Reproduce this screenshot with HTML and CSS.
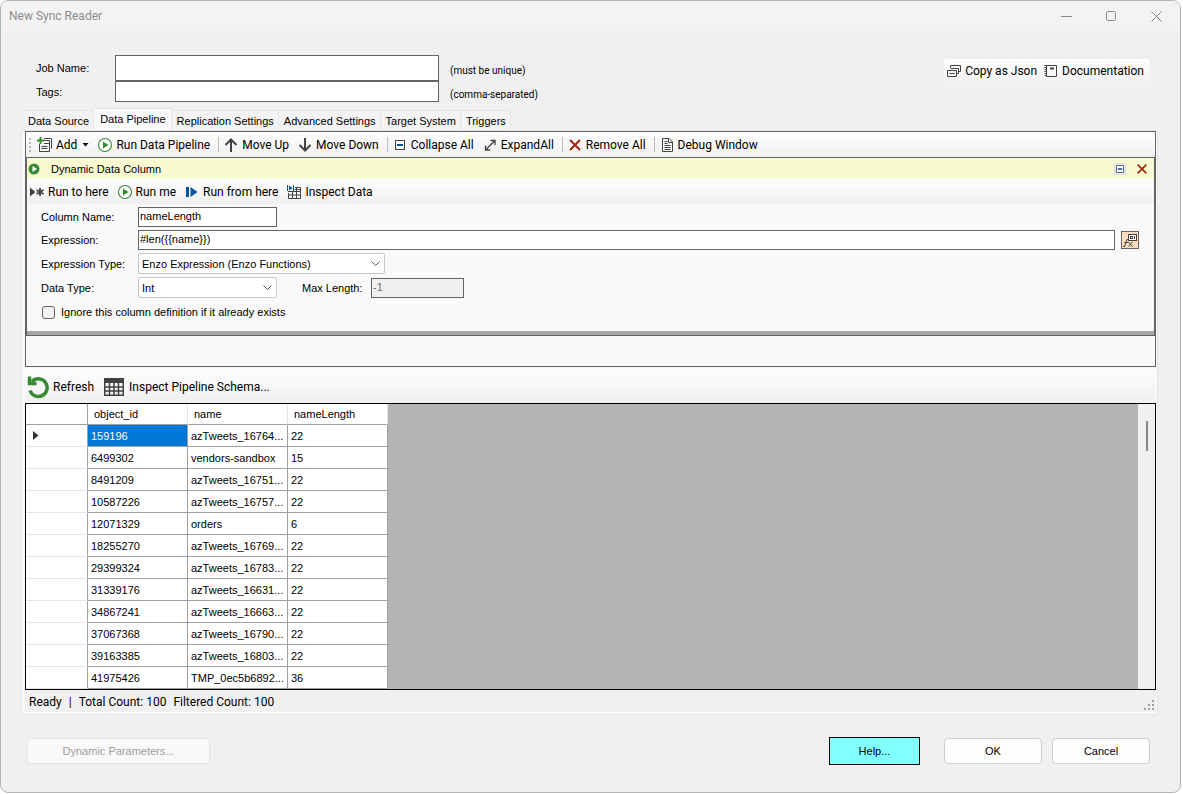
FILE: index.html
```
<!DOCTYPE html>
<html lang="en">
<head>
  <meta charset="UTF-8">
  <title>New Sync Reader</title>
  <link rel="stylesheet" href="styles.css">
</head>
<body>
  <!-- shared toolbar icons -->
  <svg class="symbols" aria-hidden="true">
    <symbol id="i-run" viewBox="0 0 16 16">
      <circle cx="8" cy="8" r="6.5" fill="#fff" stroke="#388a34" stroke-width="1.1"/>
      <path d="M6 4.5v7l5.5-3.5z" fill="#388a34"/>
    </symbol>
    <symbol id="i-x" viewBox="0 0 16 16">
      <path d="M3 3l10 10M13 3L3 13" fill="none" stroke="#a1260d" stroke-width="2"/>
    </symbol>
    <symbol id="i-collapse" viewBox="0 0 16 16">
      <rect x="3.5" y="3.5" width="9" height="9" fill="#fff" stroke="#424242"/>
      <path d="M5 8h6" stroke="#00539c" stroke-width="2"/>
    </symbol>
  </svg>

  <div class="window">
    <header class="titlebar">
      <h1>New Sync Reader</h1>
      <div class="window-buttons">
        <button aria-label="Minimize"><svg width="11" height="11"><path d="M0 5.5h11"/></svg></button>
        <button aria-label="Maximize"><svg width="11" height="11"><rect x="0.5" y="0.5" width="9" height="9" rx="1"/></svg></button>
        <button aria-label="Close"><svg width="11" height="11"><path d="M0.5 0.5l10 10M10.5 0.5l-10 10"/></svg></button>
      </div>
    </header>

    <section class="job">
      <div class="job-fields">
        <label for="job-name">Job Name:</label>
        <input id="job-name" class="job-name" type="text">
        <span class="hint">(must be unique)</span>
        <label for="tags">Tags:</label>
        <input id="tags" class="tags" type="text">
        <span class="hint">(comma-separated)</span>
      </div>
      <div class="doc-tools">
        <button class="tool">
          <svg class="icon" viewBox="0 0 16 16" fill="none" stroke="#424242"><path d="M4.5 5V2.5h10v6H12M5 5.5h7.5v5H11"/><path d="M1.5 7.5h9v6h-9zM3.5 10.5h5"/></svg>
          Copy as Json
        </button>
        <button class="tool">
          <svg class="icon" viewBox="0 0 16 16" fill="none" stroke="#424242"><path d="M3.5 2.5h10v11h-10z"/><path d="M7 5.5h4" stroke-width="2"/><path d="M2.5 2v12" stroke-width="2" stroke-dasharray="1 1"/></svg>
          Documentation
        </button>
      </div>
    </section>

    <nav class="tabs" role="tablist">
      <button class="tab" role="tab">Data Source</button>
      <button class="tab active" role="tab" aria-selected="true">Data Pipeline</button>
      <button class="tab" role="tab">Replication Settings</button>
      <button class="tab" role="tab">Advanced Settings</button>
      <button class="tab" role="tab">Target System</button>
      <button class="tab" role="tab">Triggers</button>
    </nav>

    <main class="page">
      <div class="pipeline">
        <div class="toolbar">
          <span class="grip"></span>
          <button class="tool">
            <svg class="icon" viewBox="0 0 16 16" fill="none" stroke="#424242"><path d="M7 1.5h7.5v10M7 3.5h5.5v10M2.5 7v7.5h10v-8H7M4.5 9.5h6M4.5 11.5h6"/><path d="M3.5 0v7M0 3.5h7" stroke="#388a34" stroke-width="2"/></svg>
            Add
            <svg class="caret" width="7" height="4"><path d="M0.5 0h6l-3 3.5z"/></svg>
          </button>
          <button class="tool"><svg class="icon"><use href="#i-run"/></svg>Run Data Pipeline</button>
          <span class="sep"></span>
          <button class="tool">
            <svg class="icon" viewBox="0 0 16 16" fill="none" stroke="#424242" stroke-width="2"><path d="M8 15V3M2.5 8L8 2.5 13.5 8"/></svg>
            Move Up
          </button>
          <button class="tool">
            <svg class="icon" viewBox="0 0 16 16" fill="none" stroke="#424242" stroke-width="2"><path d="M8 1v12M2.5 8L8 13.5 13.5 8"/></svg>
            Move Down
          </button>
          <span class="sep"></span>
          <button class="tool"><svg class="icon"><use href="#i-collapse"/></svg>Collapse All</button>
          <button class="tool">
            <svg class="icon" viewBox="0 0 16 16" fill="none" stroke="#424242" stroke-width="1.3"><path d="M4 12.5L12.5 4M8.5 3.5H13V8M3.5 8.5V13H8"/></svg>
            ExpandAll
          </button>
          <span class="sep"></span>
          <button class="tool"><svg class="icon"><use href="#i-x"/></svg>Remove All</button>
          <span class="sep"></span>
          <button class="tool">
            <svg class="icon" viewBox="0 0 16 16" fill="none" stroke="#424242"><path d="M3.5 1.5h6.5l3.5 3.5v9.5h-10zM9.5 1.5v4h4M5.5 4.5h3M5.5 6.5h3M5.5 8.5h6M5.5 10.5h6M5.5 12.5h6"/></svg>
            Debug Window
          </button>
        </div>

        <section class="step">
          <div class="step-header">
            <svg class="step-state" viewBox="0 0 12 12"><circle cx="6" cy="6" r="5.5" fill="#388a34"/><path d="M4.5 3v6l4.5-3z" fill="#fff"/></svg>
            <h2>Dynamic Data Column</h2>
            <button class="step-button collapse" aria-label="Collapse"><svg class="icon"><use href="#i-collapse"/></svg></button>
            <button class="step-button" aria-label="Remove"><svg class="icon"><use href="#i-x"/></svg></button>
          </div>
          <div class="toolbar step-toolbar">
            <button class="tool">
              <svg class="icon" viewBox="0 0 16 16"><path d="M1 3.500v9L6.5 8z" fill="#424242"/><path d="M11 4v8M7.5 6l7 4M14.5 6l-7 4" stroke="#424242" stroke-width="1.8"/></svg>
              Run to here
            </button>
            <button class="tool"><svg class="icon"><use href="#i-run"/></svg>Run me</button>
            <button class="tool">
              <svg class="icon" viewBox="0 0 16 16" fill="#00539c"><path d="M2 3h3v10H2zM6.5 3v10L13.5 8z"/></svg>
              Run from here
            </button>
            <button class="tool">
              <svg class="icon" viewBox="0 0 16 16" fill="none" stroke="#424242"><path d="M9 3.5h5.5v11h-12V9M2 7.5h13M2 11h13M6.5 7v8M10.5 4v11M9 5.5h6"/><path d="M1.5 1v6M7.5 1v6" stroke="#00539c"/><path d="M3 1.5v5l3.5-2.5z" fill="#00539c" stroke="none"/></svg>
              Inspect Data
            </button>
          </div>
          <div class="step-form">
            <label for="column-name">Column Name:</label>
            <div class="field"><input id="column-name" class="w-medium" type="text" value="nameLength"></div>
            <label for="expression">Expression:</label>
            <div class="field">
              <input id="expression" class="w-full" type="text" value="#len({{name}})">
              <button class="fx" aria-label="Edit expression">
                <svg width="16" height="16" viewBox="0 0 16 16" fill="none" stroke="#424242"><rect x="6.5" y="2.5" width="8" height="6" fill="#fff"/><rect x="8.5" y="4.5" width="2" height="2"/><path d="M12.5 4v3M1 14.5h1.5L5 7.5h2M2.5 10.5h4M6.5 10l4 4.5M10.5 10l-4 4.5"/></svg>
              </button>
            </div>
            <label for="expression-type">Expression Type:</label>
            <div class="field">
              <select id="expression-type" class="w-large"><option>Enzo Expression (Enzo Functions)</option></select>
            </div>
            <label for="data-type">Data Type:</label>
            <div class="field">
              <select id="data-type" class="w-medium"><option>Int</option></select>
              <label class="max-label" for="max-length">Max Length:</label>
              <input id="max-length" class="w-small" type="text" value="-1" disabled>
            </div>
            <label class="check"><input type="checkbox"> Ignore this column definition if it already exists</label>
          </div>
        </section>
      </div>

      <div class="toolbar data-toolbar">
        <button class="tool">
          <svg class="icon-large" viewBox="0 0 24 24" fill="none" stroke="#388a34" stroke-width="3.5"><path d="M6 6.5A8.800 8.800 0 1 1 4 15.500"/><path d="M3.500 1.500v7h7"/></svg>
          Refresh
        </button>
        <button class="tool">
          <svg class="icon-large" viewBox="0 0 24 24" fill="none" stroke="#424242"><path d="M2 3h20v5H2z" fill="#424242" stroke="none"/><path d="M2.75 8v12.25h18.5V8M2 12h20M2 16h20M7.5 8v12M12 8v12M16.5 8v12" stroke-width="1.5"/></svg>
          Inspect Pipeline Schema...
        </button>
      </div>

      <div class="grid">
        <table>
          <thead>
            <tr><th class="row-head"></th><th>object_id</th><th>name</th><th>nameLength</th></tr>
          </thead>
          <tbody>
            <tr><td class="row-head"><svg width="6" height="9"><path d="M0 0v9L5.5 4.5z"/></svg></td><td class="selected">159196</td><td>azTweets_16764...</td><td>22</td></tr>
            <tr><td class="row-head"></td><td>6499302</td><td>vendors-sandbox</td><td>15</td></tr>
            <tr><td class="row-head"></td><td>8491209</td><td>azTweets_16751...</td><td>22</td></tr>
            <tr><td class="row-head"></td><td>10587226</td><td>azTweets_16757...</td><td>22</td></tr>
            <tr><td class="row-head"></td><td>12071329</td><td>orders</td><td>6</td></tr>
            <tr><td class="row-head"></td><td>18255270</td><td>azTweets_16769...</td><td>22</td></tr>
            <tr><td class="row-head"></td><td>29399324</td><td>azTweets_16783...</td><td>22</td></tr>
            <tr><td class="row-head"></td><td>31339176</td><td>azTweets_16631...</td><td>22</td></tr>
            <tr><td class="row-head"></td><td>34867241</td><td>azTweets_16663...</td><td>22</td></tr>
            <tr><td class="row-head"></td><td>37067368</td><td>azTweets_16790...</td><td>22</td></tr>
            <tr><td class="row-head"></td><td>39163385</td><td>azTweets_16803...</td><td>22</td></tr>
            <tr><td class="row-head"></td><td>41975426</td><td>TMP_0ec5b6892...</td><td>36</td></tr>
          </tbody>
        </table>
        <div class="scrollbar"><div class="thumb"></div></div>
      </div>

      <div class="status">
        <span>Ready</span><span>|</span><span>Total Count: 100</span><span>Filtered Count: 100</span>
        <svg class="resize" width="10" height="10"><path d="M8 0h2v2h-2zM4 4h2v2h-2zM8 4h2v2h-2zM0 8h2v2h-2zM4 8h2v2h-2zM8 8h2v2h-2z"/></svg>
      </div>
    </main>

    <footer class="actions">
      <button class="btn params" disabled>Dynamic Parameters...</button>
      <button class="btn help">Help...</button>
      <button class="btn">OK</button>
      <button class="btn">Cancel</button>
    </footer>
  </div>
</body>
</html>
```
FILE: styles.css
```
* {
  box-sizing: border-box;
}
body {
  margin: 0;
  background: #fff;
  font-family: "Liberation Sans", Arial, sans-serif;
  font-size: 11px;
  line-height: 14px;
  color: #000;
}
button, input, select {
  font: inherit;
  color: inherit;
  margin: 0;
}
h1, h2 {
  margin: 0;
  font-size: inherit;
  font-weight: normal;
}
.symbols {
  position: absolute;
  width: 0;
  height: 0;
}
.window {
  display: flex;
  flex-direction: column;
  min-height: calc(100vh - 1px);
  margin-right: 2px;
  border: 1px solid #b4b4b4;
  border-radius: 8px;
  background: #f0f0f0;
  overflow: hidden;
}

/* title bar */
.titlebar {
  display: flex;
  justify-content: space-between;
  align-items: center;
  height: 30px;
  padding: 0 18px 0 8px;
  background: #f3f3f3;
  font-family: Roboto, sans-serif;
  font-size: 12px;
  color: #8b8b8b;
}
.window-buttons {
  display: flex;
  gap: 34px;
}
.window-buttons button {
  display: flex;
  padding: 0;
  border: none;
  background: none;
}
.window-buttons svg {
  fill: none;
  stroke: #8b8b8b;
}

/* job fields */
.job {
  display: flex;
  justify-content: space-between;
  align-items: flex-start;
  padding: 24px 30px 0 35px;
}
.job-fields {
  display: grid;
  grid-template-columns: 79px 324px auto;
  align-items: center;
}
.job-fields .hint {
  padding: 6px 0 0 11px;
  font-family: Roboto, sans-serif;
  font-size: 10px;
}
input[type="text"] {
  border: 1px solid #646464;
  background: #fff;
  padding: 0 0 2px 1px;
  height: 20px;
}
input[type="text"].job-name {
  height: 26px;
}
input[type="text"].tags {
  height: 21px;
}
.doc-tools {
  display: flex;
  align-items: center;
  gap: 6px;
  height: 26px;
  margin-top: 4px;
  padding: 0 6px 3px 2px;
  border-radius: 3px;
  background: linear-gradient(#fdfdfd, #f0f0f0);
}

/* tabs */
.tabs {
  display: flex;
  align-items: flex-end;
  padding-left: 22px;
  margin-top: 6px;
}
.tab {
  height: 20px;
  padding: 0 4px 0 5px;
  border: 1px solid #e5e5e5;
  border-width: 1px 1px 0 0;
  background: #f3f3f3;
}
.tab.active {
  height: 22px;
  padding: 0 5px 2px 6px;
  background: #f9f9f9;
}
.page {
  margin: 0 22px 0 20px;
  padding: 0 1px 2px 3px;
  border: 1px solid #e5e5e5;
  background: #f9f9f9;
}

/* toolbars */
.toolbar {
  display: flex;
  align-items: center;
  gap: 8px;
  height: 25px;
  padding-left: 3px;
  background: linear-gradient(#fdfdfd, #f0f0f0);
}
.tool {
  display: flex;
  align-items: center;
  gap: 3px;
  padding: 0;
  border: none;
  background: none;
  font-family: Roboto, sans-serif;
  font-size: 12px;
  line-height: 16px;
  white-space: nowrap;
}
.icon {
  width: 16px;
  height: 16px;
  flex: none;
}
.icon-large {
  width: 24px;
  height: 24px;
}
.caret {
  margin-left: 2px;
}
.grip {
  width: 2px;
  height: 14px;
  margin-right: -2px;
  background: repeating-linear-gradient(#b4b4b4 0 2px, transparent 2px 4px);
}
.sep {
  width: 1px;
  height: 15px;
  margin-right: -4px;
  background: #bdbdbd;
}

/* pipeline */
.pipeline {
  min-height: 236px;
  border: 1px solid #646464;
}
.step {
  border: 1px solid #646464;
}
.step-header {
  display: flex;
  align-items: center;
  height: 21px;
  padding: 0 5px 0 1px;
  background: #f9f9d2;
}
.step-header h2 {
  flex: 1;
  padding-left: 11px;
}
.step-state {
  width: 12px;
  height: 12px;
}
.step-button {
  display: flex;
  padding: 0;
  border: none;
  background: none;
}
.step-button .icon {
  width: 14px;
  height: 14px;
}
.step-button.collapse .icon {
  width: 12px;
  height: 12px;
}
.step-button.collapse {
  margin-right: 9px;
  background: #dfe3e6;
}
.step-toolbar {
  padding-left: 2px;
}
.step-form {
  display: grid;
  grid-template-columns: 97px 1fr;
  align-items: center;
  row-gap: 3px;
  padding: 3px 15px 8px 14px;
  border-bottom: 4px solid #a6a6a6;
  background: #f9f9f9;
}
.field {
  display: flex;
  align-items: center;
}
.w-small {
  width: 93px;
}
.w-medium {
  width: 139px;
}
.w-large {
  width: 247px;
}
.w-full {
  flex: 1;
}
.max-label {
  width: 94px;
  padding-left: 25px;
}
input[type="text"]:disabled {
  background: #f0f0f0;
  color: #6d6d6d;
}
select {
  height: 21px;
  padding: 0 3px;
  border: 1px solid #c8c8c8;
  border-radius: 2px;
  appearance: none;
  background: #fff url("data:image/svg+xml,%3Csvg xmlns='http://www.w3.org/2000/svg' width='9' height='5'%3E%3Cpath d='M.5.5l4 4 4-4' fill='none' stroke='%23555'/%3E%3C/svg%3E") no-repeat right 4px center;
}
.fx {
  display: flex;
  justify-content: center;
  align-items: center;
  width: 18px;
  height: 18px;
  margin-left: 6px;
  padding: 0;
  border: 1px solid #646464;
  background: #fbdcbc;
}
.check {
  display: flex;
  align-items: center;
  grid-column: 1 / -1;
  gap: 6px;
  height: 22px;
}
.check input {
  appearance: none;
  width: 13px;
  height: 13px;
  margin-left: 1px;
  border: 1px solid #646464;
  border-radius: 3px;
  background: #f3f3f3;
}

/* data grid */
.data-toolbar {
  height: 33px;
  margin-top: 3px;
  padding-left: 1px;
}
.grid {
  display: flex;
  justify-content: space-between;
  border: 1px solid #000;
  background: #b4b4b4;
}
table {
  table-layout: fixed;
  width: 362px;
  border-collapse: separate;
  border-spacing: 0;
  background: #fff;
}
th, td {
  width: 100px;
  height: 22px;
  padding: 0 3px;
  border-right: 1px solid #a0a0a0;
  border-bottom: 1px solid #a0a0a0;
  text-align: left;
  font-weight: normal;
  white-space: nowrap;
}
th {
  height: 21px;
  padding: 0 6px;
  border-right-color: #e5e5e5;
}
.row-head {
  width: 62px;
  padding: 0 7px;
  border-right-color: #a0a0a0;
}
td.row-head {
  border-bottom-color: #e5e5e5;
}
.row-head svg {
  display: block;
  fill: #333;
}
.selected {
  background: #0078d7;
  color: #fff;
}
.scrollbar {
  width: 17px;
  padding: 17px 4px 0 8px;
  background: #f0f0f0;
}
.thumb {
  width: 2px;
  height: 30px;
  background: #8a8a8a;
}
.status {
  display: flex;
  align-items: center;
  gap: 7px;
  height: 22px;
  padding: 1px 2px 0 4px;
  background: #f0f0f0;
  font-family: Roboto, sans-serif;
  font-size: 12px;
}
.resize {
  align-self: flex-end;
  margin-left: auto;
  margin-bottom: 2px;
  fill: #a0a0a0;
}

/* dialog buttons */
.actions {
  display: flex;
  align-items: center;
  gap: 10px;
  padding: 22px 30px 0 26px;
}
.btn {
  width: 98px;
  height: 26px;
  padding: 0;
  border: 1px solid #d0d0d0;
  border-radius: 4px;
  background: #fdfdfd;
}
.params {
  width: 183px;
  margin-right: auto;
  border-color: #e5e5e5;
  background: #f9f9f9;
  color: #9d9d9d;
}
.help {
  width: 91px;
  height: 28px;
  margin-right: 14px;
  border: 1px solid #000;
  border-radius: 0;
  background: #80ffff;
}
```
